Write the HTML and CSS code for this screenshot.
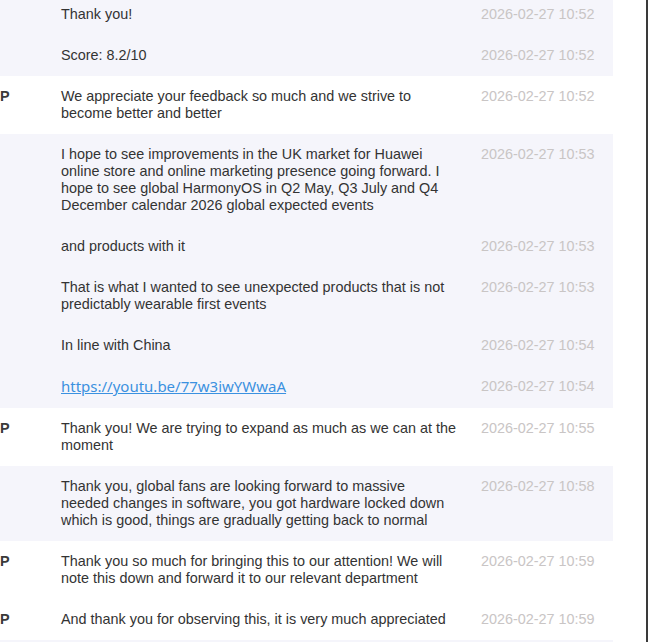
FILE: index.html
```html
<!DOCTYPE html>
<html lang="en">
<head>
<meta charset="utf-8">
<title>Chat log</title>
<link rel="stylesheet" href="styles.css">
</head>
<body>
<div class="frame">
  <div class="log">
    <div class="row cust">
      <div class="name"></div>
      <div class="msg">Thank you!</div>
      <div class="time">2026-02-27 10:52</div>
    </div>
    <div class="row cust">
      <div class="name"></div>
      <div class="msg">Score: 8.2/10</div>
      <div class="time">2026-02-27 10:52</div>
    </div>
    <div class="row agent">
      <div class="name">P</div>
      <div class="msg">We appreciate your feedback so much and we strive to become better and better</div>
      <div class="time">2026-02-27 10:52</div>
    </div>
    <div class="row cust">
      <div class="name"></div>
      <div class="msg">I hope to see improvements in the UK market for Huawei online store and online marketing presence going forward. I hope to see global HarmonyOS in Q2 May, Q3 July and Q4 December calendar 2026 global expected events</div>
      <div class="time">2026-02-27 10:53</div>
    </div>
    <div class="row cust">
      <div class="name"></div>
      <div class="msg">and products with it</div>
      <div class="time">2026-02-27 10:53</div>
    </div>
    <div class="row cust">
      <div class="name"></div>
      <div class="msg">That is what I wanted to see unexpected products that is not predictably wearable first events</div>
      <div class="time">2026-02-27 10:53</div>
    </div>
    <div class="row cust">
      <div class="name"></div>
      <div class="msg">In line with China</div>
      <div class="time">2026-02-27 10:54</div>
    </div>
    <div class="row cust">
      <div class="name"></div>
      <div class="msg"><a class="link" href="#">https://youtu.be/77w3iwYWwaA</a></div>
      <div class="time">2026-02-27 10:54</div>
    </div>
    <div class="row agent">
      <div class="name">P</div>
      <div class="msg">Thank you! We are trying to expand as much as we can at the moment</div>
      <div class="time">2026-02-27 10:55</div>
    </div>
    <div class="row cust">
      <div class="name"></div>
      <div class="msg">Thank you, global fans are looking forward to massive needed&nbsp;changes in software, you got hardware locked down which is good, things are gradually getting back to normal</div>
      <div class="time">2026-02-27 10:58</div>
    </div>
    <div class="row agent">
      <div class="name">P</div>
      <div class="msg">Thank you so much for bringing this to our attention! We will note this down and forward it to our relevant department</div>
      <div class="time">2026-02-27 10:59</div>
    </div>
    <div class="row agent">
      <div class="name">P</div>
      <div class="msg">And thank you for observing this, it is very much appreciated</div>
      <div class="time">2026-02-27 10:59</div>
    </div>
    <div class="row cust tail"></div>
  </div>
</div>
</body>
</html>
```

FILE: styles.css
```css
html, body {
  margin: 0;
  padding: 0;
  background: #ffffff;
  overflow: hidden;
}

.frame {
  width: 648px;
  height: 642px;
  box-sizing: border-box;
  border-right: 2px solid #3a3a3a;
  overflow: hidden;
}

.log {
  width: 613px;
  margin-top: -6px;
  font-family: "Liberation Sans", Arial, sans-serif;
  font-size: 14.4px;
  line-height: 17px;
  color: #333333;
}

.row {
  display: grid;
  grid-template-columns: 61px 396px auto;
  padding: 12px 18px 12px 0;
}

.cust {
  background: #f5f5fb;
}

.agent {
  background: #ffffff;
}

.tail {
  height: 40px;
  padding: 0;
}

.name {
  font-weight: bold;
  color: #3a3a3a;
}

.msg {
  color: #333333;
}

.time {
  margin-left: 24px;
  color: #c9c5c5;
  white-space: nowrap;
}

.link {
  font-family: "Noto Sans", "Open Sans", sans-serif;
  font-size: 15px;
  color: #3b91e0;
  text-decoration: underline;
}
```
